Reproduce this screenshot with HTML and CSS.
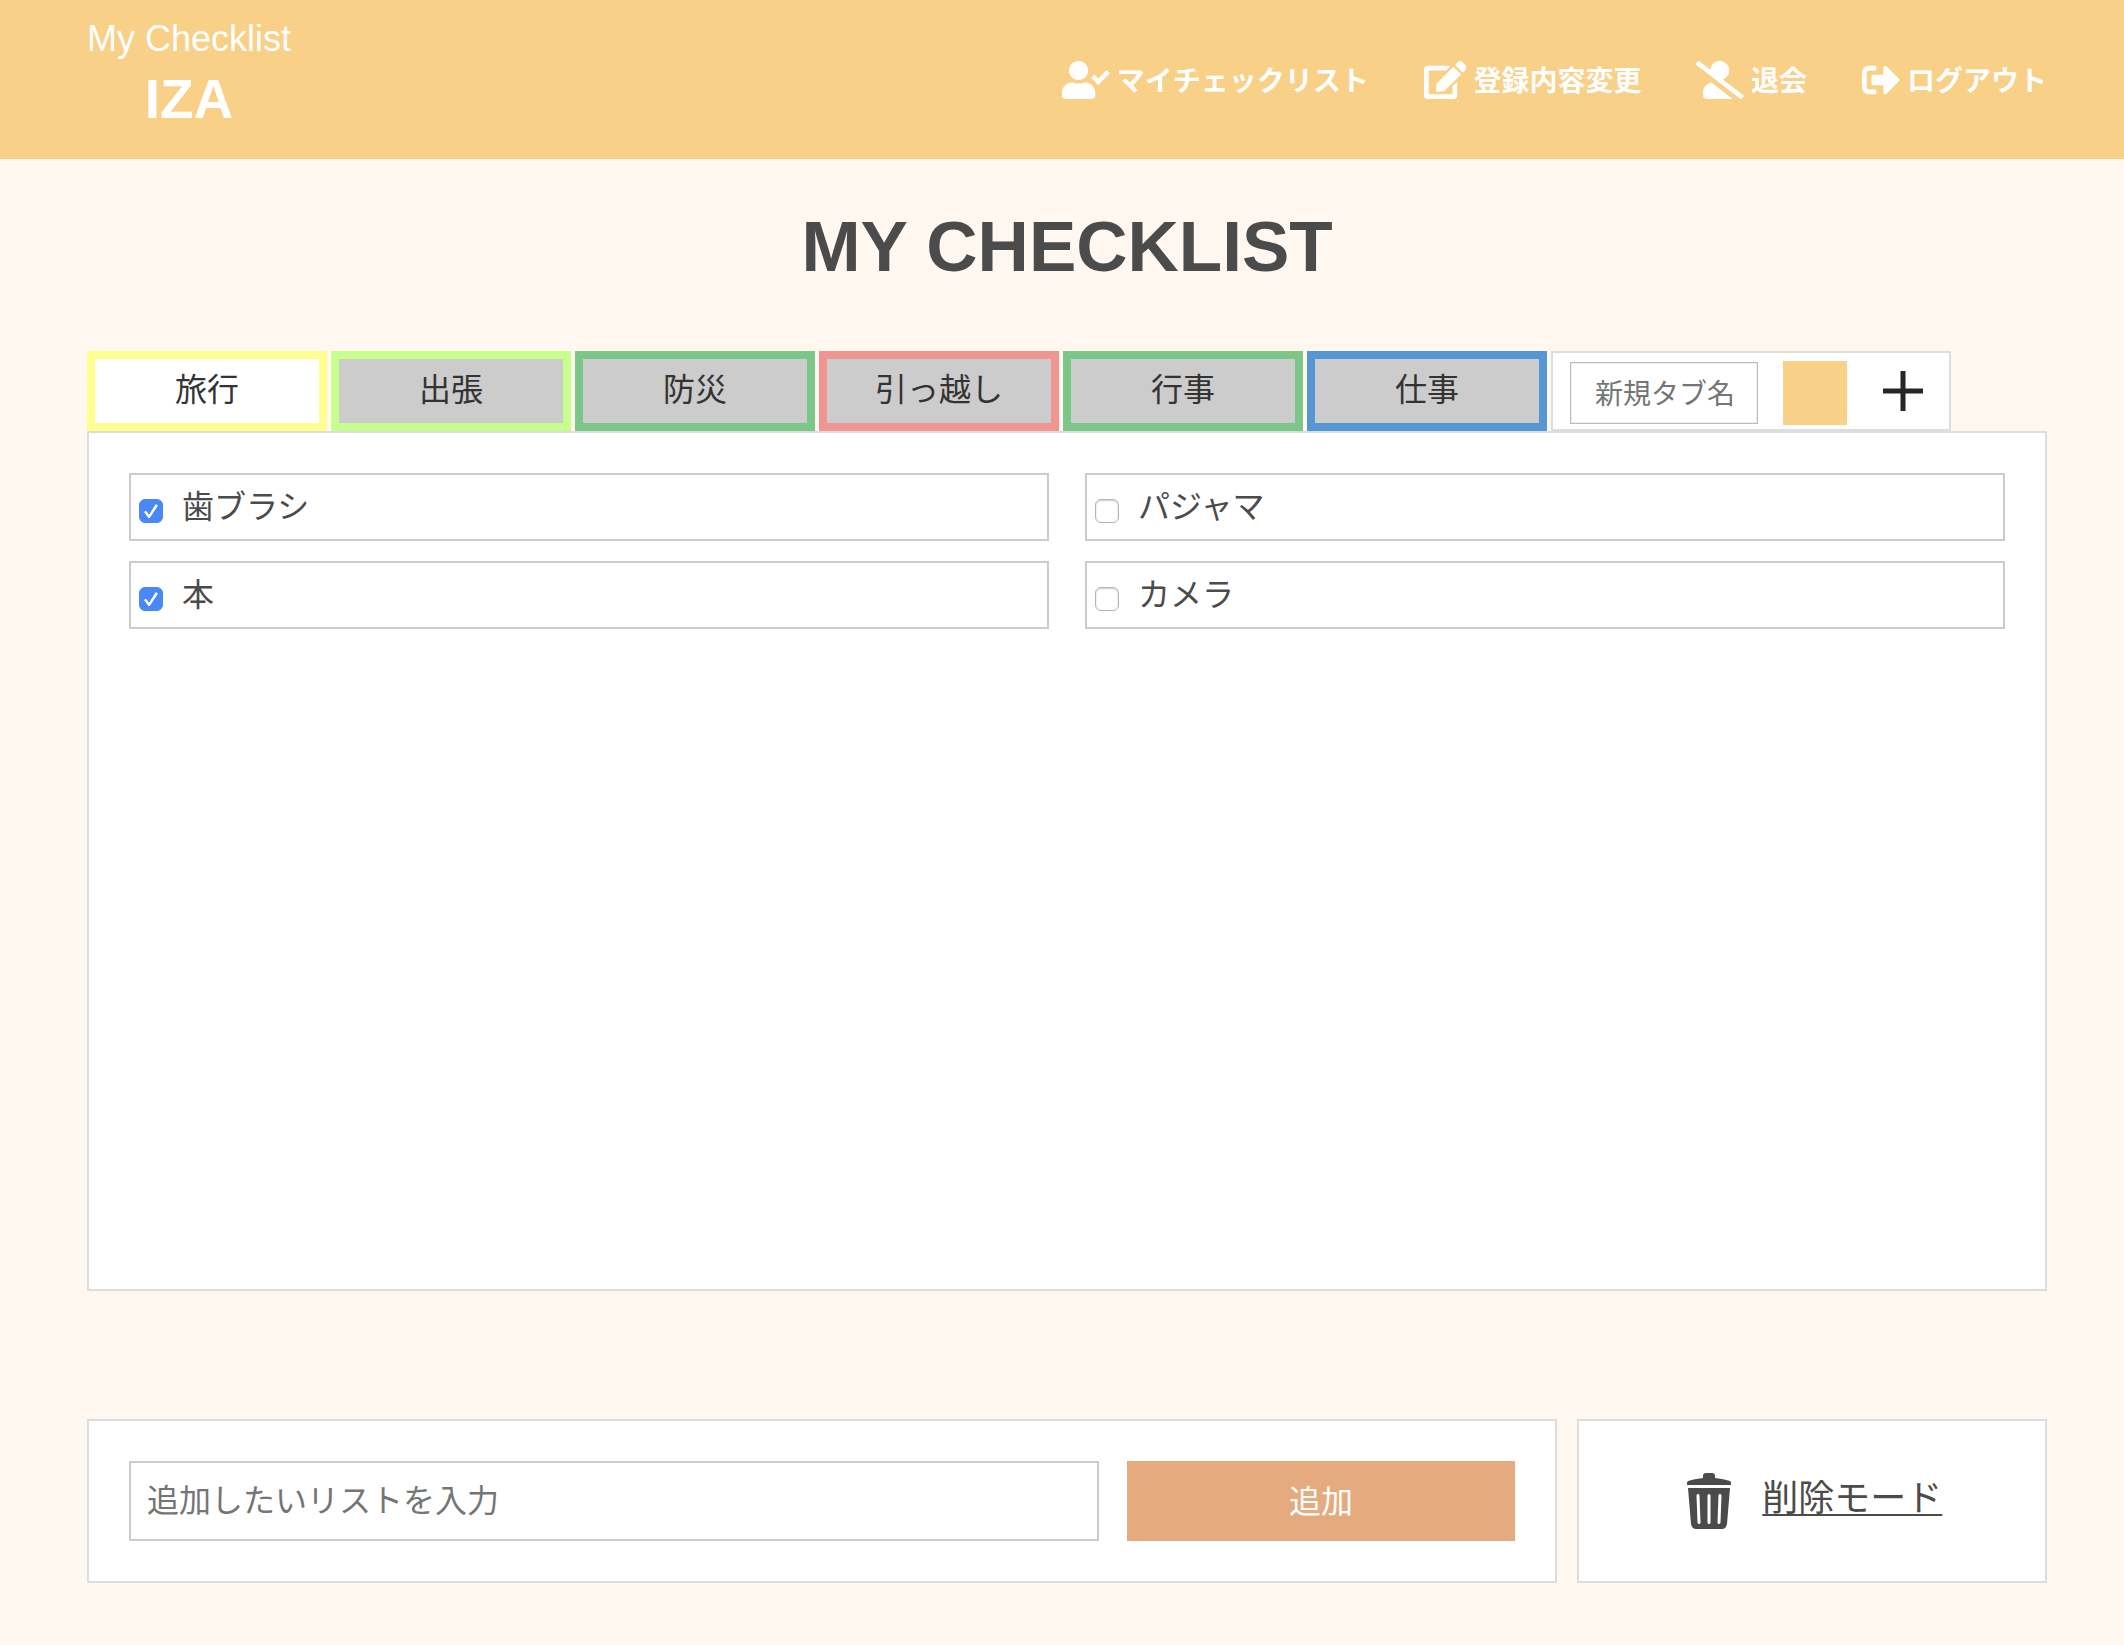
FILE: index.html
```html
<!DOCTYPE html>
<html lang="ja">
<head>
<meta charset="utf-8">
<meta name="viewport" content="width=device-width, initial-scale=1">
<title>My Checklist</title>
<link rel="stylesheet" href="styles.css">
</head>
<body>
<header class="header">
  <div class="brand">
    <a class="brand-name" href="#">My Checklist</a>
    <p class="brand-user">IZA</p>
  </div>
  <nav class="nav">
    <a class="nav-link" href="#">
      <svg class="nav-icon" viewBox="0 0 640 512" aria-hidden="true"><path d="M224 256c70.7 0 128-57.3 128-128S294.7 0 224 0 96 57.3 96 128s57.3 128 128 128zm89.6 32h-16.7c-22.2 10.2-46.9 16-72.9 16s-50.6-5.8-72.9-16h-16.7C60.2 288 0 348.2 0 422.4V464c0 26.5 21.5 48 48 48h352c26.5 0 48-21.5 48-48v-41.6c0-74.2-60.2-134.4-134.4-134.4zM636.6 159.6L608.8 131.5c-4.5-4.5-11.8-4.5-16.3-.1L487.8 235.3l-45.4-45.7c-4.5-4.5-11.8-4.5-16.3-.1l-28.1 27.9c-4.5 4.5-4.5 11.8-.1 16.3l81.7 82.3c4.5 4.5 11.8 4.5 16.3.1l140.7-139.6c4.5-4.6 4.5-11.8.1-16.3z"/></svg>
      <span class="nav-text">マイチェックリスト</span>
    </a>
    <a class="nav-link" href="#">
      <svg class="nav-icon" viewBox="0 0 576 512" aria-hidden="true"><path d="M402.6 83.2l90.2 90.2c3.8 3.8 3.8 10 0 13.8L274.4 405.6l-92.8 10.3c-12.4 1.4-22.9-9.1-21.5-21.5l10.3-92.8L388.8 83.2c3.8-3.8 10-3.8 13.8 0zm162-22.9l-48.8-48.8c-15.2-15.2-39.9-15.2-55.2 0l-35.4 35.4c-3.8 3.8-3.8 10 0 13.8l90.2 90.2c3.8 3.8 10 3.8 13.8 0l35.4-35.4c15.2-15.3 15.2-40 0-55.2zM384 346.2V448H64V128h229.8c3.2 0 6.2-1.3 8.5-3.5l40-40c7.6-7.6 2.2-20.5-8.5-20.5H48C21.5 64 0 85.5 0 112v352c0 26.5 21.5 48 48 48h352c26.5 0 48-21.5 48-48V306.2c0-10.7-12.9-16-20.5-8.5l-40 40c-2.2 2.3-3.5 5.3-3.5 8.5z"/></svg>
      <span class="nav-text">登録内容変更</span>
    </a>
    <a class="nav-link" href="#">
      <svg class="nav-icon" viewBox="0 0 640 512" aria-hidden="true"><path d="M633.8 458.1L362.3 248.3C412.1 230.7 448 183.8 448 128 448 57.3 390.7 0 320 0c-67.1 0-121.5 51.8-126.9 117.4L45.5 3.4C38.5-2 28.5-.8 23 6.2L3.4 31.4c-5.4 7-4.2 17 2.8 22.4l588.4 454.7c7 5.4 17 4.2 22.5-2.8l19.6-25.3c5.4-6.8 4.1-16.9-2.9-22.3zM96 422.4V464c0 26.5 21.5 48 48 48h350.2L207.4 290.3C144.2 301.3 96 356 96 422.4z"/></svg>
      <span class="nav-text">退会</span>
    </a>
    <a class="nav-link" href="#">
      <svg class="nav-icon" viewBox="0 0 512 512" aria-hidden="true"><path d="M497 273L329 441c-15 15-41 4.5-41-17v-96H152c-13.3 0-24-10.7-24-24v-96c0-13.3 10.7-24 24-24h136V88c0-21.4 25.9-32 41-17l168 168c9.3 9.4 9.3 24.6 0 34zM192 436v-40c0-6.6-5.4-12-12-12H96c-17.7 0-32-14.3-32-32V160c0-17.7 14.3-32 32-32h84c6.6 0 12-5.4 12-12V76c0-6.6-5.4-12-12-12H96c-53 0-96 43-96 96v192c0 53 43 96 96 96h84c6.6 0 12-5.4 12-12z"/></svg>
      <span class="nav-text">ログアウト</span>
    </a>
  </nav>
</header>

<main class="main">
  <h1 class="title">MY CHECKLIST</h1>

  <div class="tabs">
    <button class="tab tab-yellow tab-active" type="button">旅行</button>
    <button class="tab tab-lime" type="button">出張</button>
    <button class="tab tab-green" type="button">防災</button>
    <button class="tab tab-red" type="button">引っ越し</button>
    <button class="tab tab-green" type="button">行事</button>
    <button class="tab tab-blue" type="button">仕事</button>
    <form class="new-tab">
      <input class="new-tab-name" type="text" placeholder="新規タブ名" aria-label="新規タブ名">
      <button class="new-tab-color" type="button" aria-label="タブの色"></button>
      <button class="new-tab-add" type="button" aria-label="タブを追加">
        <svg class="plus" viewBox="0 0 40 40" aria-hidden="true"><path d="M20 0v40M0 20h40"/></svg>
      </button>
    </form>
  </div>

  <section class="panel">
    <ul class="list">
      <li><label class="item"><input class="check" type="checkbox" checked><span>歯ブラシ</span></label></li>
      <li><label class="item"><input class="check" type="checkbox"><span>パジャマ</span></label></li>
      <li><label class="item"><input class="check" type="checkbox" checked><span>本</span></label></li>
      <li><label class="item"><input class="check" type="checkbox"><span>カメラ</span></label></li>
    </ul>
  </section>

  <div class="actions">
    <form class="card add-form">
      <input class="add-input" type="text" placeholder="追加したいリストを入力" aria-label="追加したいリストを入力">
      <button class="add-button" type="button">追加</button>
    </form>
    <div class="card delete-card">
      <svg class="trash" viewBox="0 0 44 56" aria-hidden="true">
        <path d="M16 5V3q0-3 3-3h6q3 0 3 3v2q9 1 15 3 1 1 1 2v2H0v-2q0-1 1-2 6-2 15-3z"/>
        <path d="M1 15h42l-3 36q-1 5-5 5H9q-4 0-5-5z"/>
        <path class="trash-slot" d="M11 22.500l1 27M22 22.500v27M33 22.500l-1 27"/>
      </svg>
      <a class="delete-link" href="#">削除モード</a>
    </div>
  </div>
</main>
</body>
</html>
```
FILE: styles.css
```css
* {
  box-sizing: border-box;
}

body {
  margin: 0;
  background: #fff7f0;
  color: #4b4b4b;
  font-family: "Liberation Sans", "Noto Sans CJK JP", sans-serif;
  font-size: 32px;
}

button,
input {
  margin: 0;
  font: inherit;
  border-radius: 0;
}

/* Header */
.header {
  display: flex;
  align-items: center;
  justify-content: space-between;
  min-height: 159px;
  padding: 0 77px 0 87px;
  background: #f8d088;
  color: #fff;
}

.brand {
  display: flex;
  flex-direction: column;
  align-items: center;
  padding-bottom: 14px;
}

.brand-name {
  color: inherit;
  font-size: 36px;
  line-height: 52px;
  text-decoration: none;
}

.brand-user {
  margin: 0;
  font-size: 55px;
  font-weight: bold;
  line-height: 68px;
}

.nav {
  display: flex;
  gap: 55px;
}

.nav-link {
  display: flex;
  align-items: center;
  gap: 7px;
  color: inherit;
  font-size: 28px;
  font-weight: bold;
  line-height: 40px;
  text-decoration: none;
}

.nav-icon {
  height: 38px;
  fill: currentColor;
}

.nav-text {
  padding-top: 4px;
}

/* Page */
.main {
  padding: 48px 77px 62px 87px;
}

.title {
  margin: 0 0 64px;
  font-size: 71px;
  line-height: 80px;
  text-align: center;
}

/* Tabs */
.tabs {
  display: flex;
  gap: 4px;
}

.tab {
  flex: 0 1 240px;
  height: 80px;
  padding: 0 0 8px;
  border: 8px solid;
  background: #ccc;
  color: #333;
}

.tab-active {
  background: #fff;
}

.tab-yellow {
  border-color: #ffff90;
}

.tab-lime {
  border-color: #c7ff8c;
}

.tab-green {
  border-color: #7ac788;
}

.tab-red {
  border-color: #f19592;
}

.tab-blue {
  border-color: #5597d3;
}

.new-tab {
  display: flex;
  align-items: center;
  flex: 0 1 400px;
  height: 80px;
  padding: 4px 17px 0;
  border: 2px solid #ddd;
  background: #fff;
}

.new-tab-name {
  width: 188px;
  height: 62px;
  padding: 4px 20px 0 24px;
  border: 1px solid #bbb;
  box-shadow: inset 0 0 0 1px #eee;
  font-size: 28px;
}

.new-tab-name::placeholder,
.add-input::placeholder {
  color: #757575;
}

.new-tab-color {
  width: 64px;
  height: 64px;
  margin: 0 36px 0 25px;
  padding: 0;
  border: 0;
  background: #f8d088;
}

.new-tab-add {
  display: flex;
  padding: 0 0 4px;
  border: 0;
  background: none;
}

.plus {
  width: 40px;
  height: 40px;
  stroke: #262626;
  stroke-width: 5;
}

/* Checklist */
.panel {
  min-height: 860px;
  padding: 40px;
  border: 2px solid #ddd;
  background: #fff;
}

.list {
  display: grid;
  grid-template-columns: 1fr 1fr;
  gap: 20px 36px;
  margin: 0;
  padding: 0;
  list-style: none;
}

.item {
  display: flex;
  gap: 19px;
  height: 68px;
  padding: 8px;
  border: 2px solid #ccc;
  line-height: 48px;
}

.check {
  appearance: none;
  width: 24px;
  height: 24px;
  margin-top: 16px;
  border: 1px solid #b4b4b4;
  border-radius: 6px;
  background: #fff;
  box-shadow: inset 0 1px 2px #ccc;
}

.check:checked {
  border-color: #4a88f7;
  background: #4a88f7;
  box-shadow: none;
}

.check:checked::before {
  content: "";
  display: block;
  width: 14px;
  height: 14px;
  margin: 4px;
  background: #fff;
  clip-path: polygon(0 58%, 14% 48%, 37% 76%, 84% 0, 100% 10%, 41% 100%, 32% 100%);
}

/* Bottom cards */
.actions {
  display: flex;
  justify-content: space-between;
  margin-top: 128px;
}

.card {
  display: flex;
  padding: 40px;
  border: 2px solid #ddd;
  background: #fff;
}

.add-form {
  width: 75%;
  justify-content: space-between;
}

.add-input {
  width: 70%;
  height: 80px;
  padding: 0 16px;
  border: 2px solid #ccc;
}

.add-button {
  width: 28%;
  padding: 0 0 4px;
  border: 0;
  background: #e5aa7d;
  color: #fff;
}

.delete-card {
  width: 24%;
  align-items: center;
  justify-content: center;
  gap: 31px;
  padding: 40px 36px 40px 42px;
}

.trash {
  width: 44px;
  height: 56px;
  fill: #4b4b4b;
}

.trash-slot {
  stroke: #fff;
  stroke-width: 3;
  stroke-linecap: round;
}

.delete-link {
  padding-bottom: 4px;
  color: inherit;
  font-size: 36px;
  line-height: 52px;
  text-decoration-thickness: 2px;
  text-underline-offset: 3px;
  text-decoration-skip-ink: none;
}
```
